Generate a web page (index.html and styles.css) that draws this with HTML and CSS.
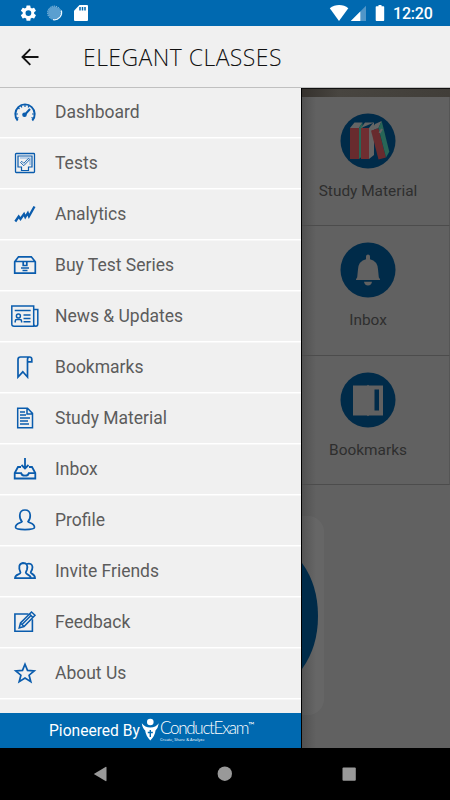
FILE: index.html
```html
<!DOCTYPE html>
<html lang="en">
<head>
<meta charset="utf-8">
<title>Elegant Classes</title>
<link rel="stylesheet" href="styles.css">
</head>
<body>
<div class="phone">
  <header class="status">
    <svg class="status-left" width="90" height="26" viewBox="0 0 90 26">
      <g transform="translate(18.8 3.5) scale(.8)"><path fill="#fff" d="M19.14 12.94c.04-.3.06-.61.06-.94s-.02-.64-.07-.94l2.03-1.58a.5.5 0 0 0 .12-.61l-1.92-3.32a.5.5 0 0 0-.59-.22l-2.39.96a7 7 0 0 0-1.62-.94l-.36-2.54a.5.5 0 0 0-.48-.41h-3.84a.5.5 0 0 0-.47.41l-.36 2.54c-.59.24-1.13.57-1.62.94l-2.39-.96a.5.5 0 0 0-.59.22L2.74 8.87a.5.5 0 0 0 .12.61l2.03 1.58a6 6 0 0 0 0 1.88l-2.03 1.58a.5.5 0 0 0-.12.61l1.92 3.32c.12.22.37.29.59.22l2.39-.96c.5.38 1.03.7 1.62.94l.36 2.54c.05.24.24.41.48.41h3.84c.24 0 .44-.17.47-.41l.36-2.54c.59-.24 1.13-.56 1.62-.94l2.39.96c.22.08.47 0 .59-.22l1.92-3.32a.5.5 0 0 0-.12-.61zM12 15.6a3.6 3.6 0 1 1 0-7.2 3.6 3.6 0 0 1 0 7.2z"/></g>
      <circle cx="54.300" cy="12.800" r="6.300" fill="#5a9fd0"/><circle cx="54.300" cy="12.800" r="6.700" fill="none" stroke="#a9cfe9" stroke-dasharray="1.2 1"/>
      <path d="M61.300 10.500a7.300 7.300 0 0 1-8.300 9.200" fill="none" stroke="#e8f6ff" stroke-width="1.300"/>
      <path fill="#fff" d="M79.500 5H87a1 1 0 0 1 1 1v14a1 1 0 0 1-1 1H75a1 1 0 0 1-1-1v-9.300z"/>
      <path stroke="#0069b0" stroke-width="1.500" d="M80 7v3.500M82.500 7v3.500M85 7v3.500"/>
    </svg>
    <svg class="status-right" width="60" height="26" viewBox="0 0 60 26">
      <path fill="#fff" d="M.8 8.300C6.200 3.900 14.300 3.900 19.300 8.300L10 20.900z"/>
      <path fill="#5096c8" d="M37 5.700V21H21.800z"/><path fill="#fff" d="M31.300 11.400V21h-9.500z"/>
      <path fill="#fff" d="M49.500 5h3v1.300h2q.7 0 .7.800v13q0 .9-.7.9h-7q-.8 0-.8-.9v-13q0-.8.8-.8h2z"/>
    </svg>
    <span class="clock">12:20</span>
  </header>

  <div class="toolbar">
    <svg class="back" width="18" height="18" viewBox="0 0 18 18"><path d="M17.500 9H1.500M9.300 1.200L1.500 9l7.800 7.800" fill="none" stroke="#151515" stroke-width="1.900"/></svg>
    <h1>ELEGANT CLASSES</h1>
  </div>

  <main class="content">
    <aside class="drawer">
      <nav class="menu">
        <a class="item"><svg viewBox="0 0 28 24"><path d="M6.700 20.500A9.700 9.700 0 1 1 21.300 20.500" stroke-width="1.900"/><path d="M4.500 14h2.500M7 7.500l1.500 1.500M14 4.500V7M23.500 14H21M5.500 18.500l2-1M22.500 18.500l-2-1M10 5.500l.8 2M18 5.500l-.8 2"/><path d="M14 14.500l5-5.500" stroke-width="2"/><circle cx="13.500" cy="14.800" r="1.700" fill="#0a5cad"/></svg><span>Dashboard</span></a>
        <a class="item"><svg viewBox="0 0 28 24"><rect x="4.500" y="2.500" width="19" height="19" rx=".8" stroke-width="1.300"/><path d="M7 5h14v11h-3.500v3.500h-7V16H7z" stroke-width="1.200"/><path d="M9 7h10v7" stroke="#86b1df"/><path d="M9.500 11.500l1.300-1.200 2 2 4.500-4.800 1.200 1.200-5.700 6z" stroke-width=".9"/></svg><span>Tests</span></a>
        <a class="item"><svg viewBox="0 0 28 24"><path d="M4.300 19.500l3.400-5 1.800 2.500 3.500-5 1.300 3 2.500-4 1.200 3.300L23.500 4.500" stroke-width="2.300"/></svg><span>Analytics</span></a>
        <a class="item"><svg viewBox="0 0 28 24"><path d="M3.700 8.700L7.500 3.800h12.800l4 4.900v11.500H3.700zM3.700 8.500h20.600M12.200 8.500v4h3.600v-4M10 15h8M11.500 17.500h5" stroke-width="1.700"/></svg><span>Buy Test Series</span></a>
        <a class="item"><svg viewBox="0 0 28 24"><path d="M.8 1.900h21.900v20.300H3q-2.200 0-2.200-2.200zM22.700 5.600h4.100v14.400q0 2.200-2 2.200t-2.100-2.200M3.700 6.600h16M12.500 11h7M12.500 14.400h7M12.500 17.800h7" stroke-width="1.500"/><circle cx="7.400" cy="12" r="2" stroke-width="1.500"/><path d="M4.200 18.500v-1.200q0-1.700 1.700-1.700h3q1.700 0 1.700 1.700v1.200" stroke-width="1.500"/></svg><span>News &amp; Updates</span></a>
        <a class="item"><svg viewBox="0 0 28 24"><path d="M7 22V4.500Q7 2 9.500 2h9Q16.500 2 16.500 4.500V22l-4.700-5.200zM16.500 6.800h4.300V4.300Q20.800 2 18.500 2" stroke-width="1.700"/></svg><span>Bookmarks</span></a>
        <a class="item"><svg viewBox="0 0 28 24"><path d="M6.700 2.200h9.800l5 5.200v14.300H6.700zM16 2.500v5.500h5.200M9 6h5M9 9h6M9 12h10M9 15h8M9 18h9" stroke-width="1.500"/></svg><span>Study Material</span></a>
        <a class="item"><svg viewBox="0 0 28 24"><path d="M14 1v10M10.500 8l3.500 3.500L17.500 8M10 10H7L3.700 16v5.500h20.600V16L21 10h-3M3.700 16.200h6.500q.6 2.500 3.800 2.500t3.800-2.500h6.500" stroke-width="1.800"/></svg><span>Inbox</span></a>
        <a class="item"><svg viewBox="0 0 28 24"><path d="M11 13.500Q8.500 11 8.800 7 9.200 2 14 2t5.200 5q.3 4-2.200 6.500c.3 1.500 6.500 1.500 6.500 5.800q0 2.300-9.500 2.300t-9.500-2.300c0-4.300 6.200-4.300 6.500-5.800z" stroke-width="1.700"/></svg><span>Profile</span></a>
        <a class="item"><svg viewBox="0 0 28 24"><path d="M9.500 13.500Q6 5 12 4q5.500 0 4 6.500l-1.200 3c0 2.500 5 1.700 5 5.700H4c0-4.500 5.500-3.200 5.500-5.700zM15.500 5q5.500-1.500 6 3 0 3-1.800 5.200c0 2 4.300 1.500 4.300 6h-5" stroke-width="1.800"/></svg><span>Invite Friends</span></a>
        <a class="item"><svg viewBox="0 0 28 24"><path d="M17.500 4H3.900v17.300h17.500v-12" stroke-width="1.600"/><path d="M8.200 18l1.300-5L20.500 2l3.500 3.300L13 16.500zM9.500 13l3.500 3.500M18.500 4l3.500 3.500M11 14.500l8.500-8.500" stroke-width="1.500"/></svg><span>Feedback</span></a>
        <a class="item"><svg viewBox="0 0 28 24"><path d="M14 3.300l2.500 6.100 6.700.5-5.100 4.300 1.700 6.500-5.800-3.600-5.800 3.600 1.700-6.500-5.100-4.300 6.700-.5z" stroke-width="1.700"/></svg><span>About Us</span></a>
      </nav>
      <footer class="pioneer">
        <span class="by">Pioneered By</span>
        <svg class="logo" width="19" height="24" viewBox="0 0 19 24"><circle cx="9.300" cy="4" r="3.300" fill="#fff"/><path fill="#fff" d="M.8 5.300q3 4.200 8.500 4.200t8.500-4.200q-.8 5-3.300 7.200Q14 18 9.300 22.400 4.800 18 4.200 12.500 1.500 10.300.8 5.300z"/><path d="M9.300 12v7M6.800 14.500h5" stroke="#0069b0" stroke-width="1.400"/></svg>
        <span class="brand"><span class="name">ConductExam<small>™</small></span><span class="tag">Create, Share &amp; Analyze</span></span>
      </footer>
    </aside>

    <section class="home">
      <div class="banner"></div>
      <div class="tile">
        <svg width="56" height="56" viewBox="0 0 56 56"><circle cx="28" cy="28" r="27.500" fill="#002b49"/>
          <path fill="#682b2e" d="M10 15h9v31h-9z"/><path fill="#656565" d="M10 15l4.500-5.500h8L19 15z"/><path fill="#286657" d="M19 15l3.500-5.500V43L19 46z"/>
          <path fill="#702e31" d="M21 15h8v31h-8z"/><path fill="#656565" d="M21 15l4-5.500h8.500L29 15v31l5-4V9.500z"/>
          <path fill="#682b2e" d="M31 17.500l7.500-2.500 7.500 29.500-7.500 2z"/><path fill="#656565" d="M31 17.500l4-6.500 6.700-3-3.200 7z"/><path fill="#286657" d="M38.500 15l3.200-7 7.600 30.700-3.300 5.800z"/><path d="M39.500 20l2.500-4" stroke="#656565" stroke-width="2"/>
        </svg><span>Study Material</span>
      </div>
      <div class="tile">
        <svg width="56" height="56" viewBox="0 0 56 56"><circle cx="28" cy="28" r="27.500" fill="#002b49"/><path fill="#616161" d="M28 12.500q2 0 2 2v2.700q7.500 1.800 8 10l.8 8 1.200 2V38H16v-.8l1.200-2 .8-8q.5-8.200 8-10v-2.700q0-2 2-2zM24 39.800h8q-.5 3.700-4 3.700t-4-3.700z"/></svg><span>Inbox</span>
      </div>
      <div class="tile">
        <svg width="56" height="56" viewBox="0 0 56 56"><circle cx="28" cy="28" r="27.500" fill="#002b49"/><path fill="#616161" d="M13 13.500h14l1-.8 1 .8h14v30H29l-1 .7-1-.7H13z"/><path fill="#002b49" d="M34.500 17.500h4.500v21h-4.500z"/></svg><span>Bookmarks</span>
      </div>
      <div class="card"><svg width="17" height="106" viewBox="0 0 17 106"><path fill="#002b49" d="M0 0Q16 22 16 53T0 106z"/></svg></div>
    </section>
  </main>

  <footer class="navbar">
    <svg width="450" height="52" viewBox="0 0 450 52" fill="#999"><path d="M93.800 26l11.700-7q1-.5 1 .7v12.600q0 1.200-1 .7z"/><circle cx="224.800" cy="25.700" r="7.200"/><rect x="342.500" y="19.500" width="13.300" height="13.300" rx="1"/></svg>
  </footer>
</div>
</body>
</html>
```

FILE: styles.css
```css
* { box-sizing: border-box; }
body { margin: 0; font-family: Roboto, sans-serif; background: #000; }
.phone { width: 450px; height: 800px; display: flex; flex-direction: column; overflow: hidden; }
.status { height: 26px; flex: none; display: flex; align-items: center; background: #0069b0; color: #fff; }
.status-right { margin-left: 239px; }
.clock { margin-left: 4px; font-size: 16px; font-weight: 500; line-height: 26px; letter-spacing: -.2px; padding-top: 1px; }
.toolbar { height: 62px; flex: none; display: flex; align-items: center; background: #f0f0f0; border-bottom: 1px solid #c0c0c0; padding-left: 21px; z-index: 1; }
.toolbar h1 { margin: 1px 0 0 44px; font: 300 23px/30px "Open Sans", sans-serif; letter-spacing: .43px; color: #111; white-space: nowrap; }
.content { height: 660px; flex: none; display: grid; grid-template-columns: 301px 149px; }
.drawer { display: flex; flex-direction: column; height: 660px; background: #f0f0f0; }
.menu { flex: 1; margin-top: -1px; }
.item { height: 51px; display: flex; align-items: center; gap: 16px; padding-left: 11px; border-bottom: 1px solid #fff; box-shadow: 0 1px 0 #f7f7f7; color: #5c5c5c; font-size: 17.5px; line-height: 24px; }
.item svg { width: 28px; height: 24px; flex: none; fill: none; stroke: #0a5cad; stroke-width: 1.2; }
.item span { margin-top: -1px; }
.pioneer { height: 35px; display: flex; align-items: center; padding-left: 49px; background: #0069b0; color: #fff; }
.by { font-size: 15.6px; line-height: 20px; width: 92px; white-space: nowrap; }
.logo { margin-top: -2px; }
.brand { display: flex; flex-direction: column; margin-top: -1px; white-space: nowrap; }
.name { font: 300 17px/19px Lato, sans-serif; letter-spacing: -1.3px; }
.name small { font-size: 8px; font-weight: 400; vertical-align: 6px; line-height: 0; letter-spacing: 0; }
.tag { font: 4px/5px "Open Sans", sans-serif; margin-top: 0; }
.home { background: linear-gradient(90deg, #515151, #616161 14px); border-left: 1px solid #000; height: 660px; overflow: hidden; }
.banner { height: 9px; border-top: 1px solid #111; background: linear-gradient(90deg, #35312d, #484540 25%, #413e39); }
.tile { height: 129.3px; margin-left: -15px; width: 163px; display: flex; flex-direction: column; align-items: center; padding-top: 16px; border-bottom: 1px solid #4c4c4c; border-right: 1px solid #555; color: #2e2e2e; font-size: 15.4px; line-height: 20px; }
.tile span { margin-top: 12px; }
.card { width: 22px; height: 199px; margin-top: 31px; padding-top: 47px; border-radius: 0 16px 16px 0; background: linear-gradient(90deg, #555, #666 14px); }
.card svg { display: block; }
.navbar { height: 52px; background: #000; }
```
